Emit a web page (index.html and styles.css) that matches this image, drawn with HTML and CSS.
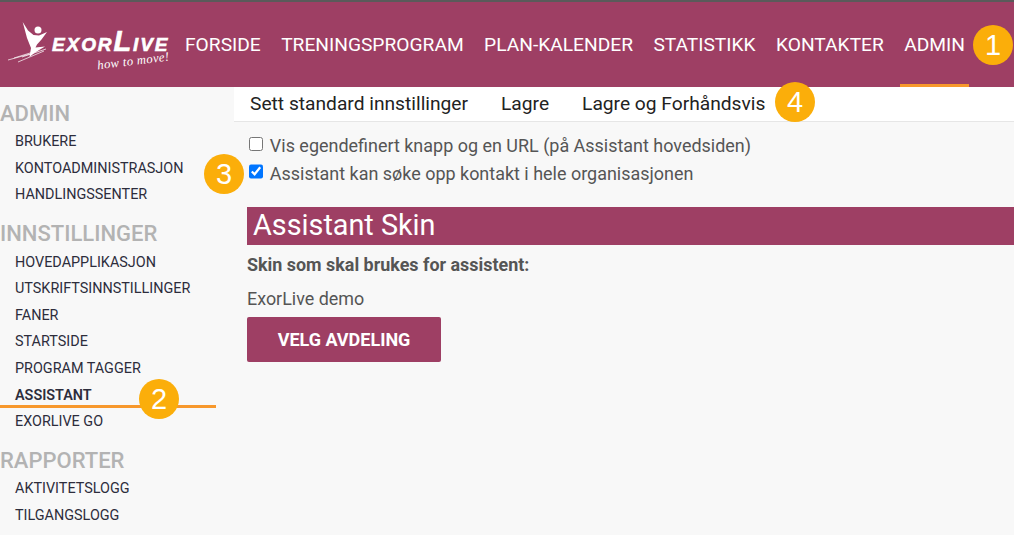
FILE: index.html
```html
<!DOCTYPE html>
<html lang="no">
<head>
  <meta charset="UTF-8" />
  <meta name="viewport" content="width=device-width, initial-scale=1.0"/>
  <title>ExorLive - Admin</title>
  <link rel="stylesheet" href="styles.css">
</head>
<body>
  <header class="topbar">
    <div class="logo">
      <svg class="logo-mark" width="44" height="44" viewBox="0 0 44 44">
        <circle cx="30" cy="9" r="3.5" fill="#fff"/>
        <path d="M14.7 1 L20 9.5 L25.5 14 L31 14.5 L39 11 L33.5 18.5 L29 23.5 L27.5 26.5 L37 25.5 L27 31.5 L21.5 36 L23 27 L19 17 Z" fill="#fff"/>
        <path d="M0 39 L22 33 M6 37 L30 29.5 M10 41 L36 30 M14 36 L38 28" stroke="#fff" stroke-width="0.7" fill="none"/>
      </svg>
      <div class="logo-text">
        <span class="logo-name">EXOR<big>L</big>IVE</span>
        <span class="logo-tag">how to move!</span>
      </div>
    </div>
    <nav class="mainnav">
      <a href="#">FORSIDE</a>
      <a href="#">TRENINGSPROGRAM</a>
      <a href="#">PLAN-KALENDER</a>
      <a href="#">STATISTIKK</a>
      <a href="#">KONTAKTER</a>
      <a href="#" class="active">ADMIN</a>
    </nav>
    <span class="badge badge-1">1</span>
  </header>

  <div class="page">
    <aside class="sidebar">
      <h3>ADMIN</h3>
      <ul>
        <li>BRUKERE</li>
        <li>KONTOADMINISTRASJON</li>
        <li>HANDLINGSSENTER</li>
      </ul>
      <h3>INNSTILLINGER</h3>
      <ul>
        <li>HOVEDAPPLIKASJON</li>
        <li>UTSKRIFTSINNSTILLINGER</li>
        <li>FANER</li>
        <li>STARTSIDE</li>
        <li>PROGRAM TAGGER</li>
        <li class="current">ASSISTANT<span class="badge badge-2">2</span></li>
        <li>EXORLIVE GO</li>
      </ul>
      <h3>RAPPORTER</h3>
      <ul>
        <li>AKTIVITETSLOGG</li>
        <li>TILGANGSLOGG</li>
      </ul>
    </aside>

    <main class="content">
      <div class="toolbar">
        <a href="#">Sett standard innstillinger</a>
        <a href="#">Lagre</a>
        <a href="#">Lagre og Forhåndsvis</a>
        <span class="badge badge-4">4</span>
      </div>

      <div class="options">
        <label class="option"><input type="checkbox"> Vis egendefinert knapp og en URL (på Assistant hovedsiden)</label>
        <label class="option"><span class="badge badge-3">3</span><input type="checkbox" checked> Assistant kan søke opp kontakt i hele organisasjonen</label>
      </div>

      <h2 class="section-title">Assistant Skin</h2>
      <p class="field-label">Skin som skal brukes for assistent:</p>
      <p class="field-value">ExorLive demo</p>
      <button class="primary-button">VELG AVDELING</button>
    </main>
  </div>
</body>
</html>
```

FILE: styles.css
```css
html, body {
  margin: 0;
  height: 535px;
  overflow: hidden;
}
body {
  font-family: Roboto, Arial, sans-serif;
  background: #f8f8f8;
  color: #555;
  position: relative;
}
a {
  color: inherit;
  text-decoration: none;
}

.topbar {
  display: flex;
  height: 85px;
  background: #9e3f64;
  border-top: 2px solid #5a5a5a;
}
.logo {
  display: flex;
  width: 181px;
  padding: 19px 0 0 8px;
  box-sizing: border-box;
}
.logo-mark {
  flex: none;
}
.logo-text {
  display: flex;
  flex-direction: column;
  margin: 7px 0 0 0;
}
.logo-name {
  font-family: "Liberation Sans", Arial, sans-serif;
  font-weight: bold;
  font-style: italic;
  font-size: 19px;
  line-height: 26px;
  letter-spacing: 1.9px;
  color: #fff;
  white-space: nowrap;
  -webkit-text-stroke: 0.6px #fff;
}
.logo-name big {
  font-size: 29px;
  line-height: 26px;
}
.logo-tag {
  font-family: "Liberation Serif", serif;
  font-style: italic;
  font-size: 12.6px;
  line-height: 14px;
  letter-spacing: 0.4px;
  color: #fff;
  margin: -4px 0 0 45px;
  white-space: nowrap;
  transform: rotate(-7deg);
}

.mainnav {
  display: flex;
  gap: 12.4px;
}
.mainnav a {
  padding: 0 4px;
  font-size: 19.2px;
  line-height: 85px;
  height: 82px;
  color: #fff;
  border-bottom: 3px solid transparent;
  white-space: nowrap;
}
.mainnav a.active {
  border-bottom-color: #f7982c;
}

.page {
  display: flex;
}
.sidebar {
  width: 216px;
  margin-right: 18px;
  padding-top: 1px;
  flex: none;
}
.sidebar h3 {
  margin: 0;
  padding: 13.5px 0 3.5px;
  font-size: 22px;
  line-height: 24px;
  font-weight: 500;
  color: #b3b3b3;
}
.sidebar ul {
  list-style: none;
  margin: 0;
  padding: 0;
}
.sidebar li {
  padding-left: 15px;
  font-size: 14.4px;
  line-height: 26.5px;
  font-weight: 400;
  color: #2d2d3c;
}
.sidebar li.current {
  font-weight: 600;
  line-height: 27px;
  border-bottom: 3px solid #f7982c;
  height: 22.5px;
  margin-bottom: 1px;
}

.content {
  flex: 1;
  min-width: 0;
}
.toolbar {
  display: flex;
  gap: 33px;
  height: 34px;
  padding-left: 16px;
  background: #fff;
  border-bottom: 1px solid #e6e6e6;
  font-size: 19.2px;
  line-height: 34px;
  color: #222;
}
.options {
  padding: 10px 0 1px 16px;
}
.option {
  display: block;
  font-size: 17.97px;
  line-height: 27.5px;
  color: #555;
  white-space: nowrap;
}
.option input {
  margin: 0 2px 0 -1px;
  width: 14.4px;
  height: 14.4px;
  vertical-align: 1px;
}
.section-title {
  margin: 19px 0 0 13px;
  padding-left: 6px;
  height: 38px;
  background: #9e3f64;
  color: #fff;
  font-size: 28.8px;
  line-height: 36px;
  font-weight: 400;
}
.field-label {
  margin: 10px 0 0 13px;
  font-size: 17.92px;
  line-height: 20px;
  font-weight: 700;
}
.field-value {
  margin: 14px 0 0 13px;
  font-size: 17.92px;
  line-height: 20px;
}
.primary-button {
  display: block;
  margin: 8px 0 0 13px;
  width: 194px;
  height: 45px;
  border: none;
  border-radius: 2px;
  background: #9e3f64;
  color: #fff;
  font-family: inherit;
  font-size: 18px;
  font-weight: 700;
}

.badge {
  position: absolute;
  width: 40px;
  height: 40px;
  border-radius: 50%;
  background: #fbae0a;
  color: #fff;
  font-family: "Liberation Sans", Arial, sans-serif;
  font-size: 29px;
  font-weight: 400;
  line-height: 40px;
  text-align: center;
}
.badge-1 { left: 973px; top: 25px; }
.badge-2 { left: 139px; top: 379px; }
.badge-3 { left: 204px; top: 154px; }
.badge-4 { left: 775px; top: 82px; }
```
